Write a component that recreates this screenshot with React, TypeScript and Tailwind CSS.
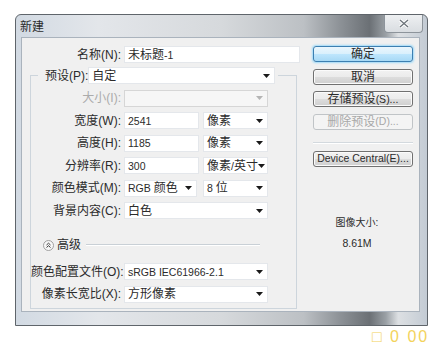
import React from "react";

function L({ children }: { children: React.ReactNode }) {
  return <span className="text-[10.5px]">{children}</span>;
}

function Arrow({ disabled }: { disabled?: boolean }) {
  return (
    <svg width="7" height="4" viewBox="0 0 7 4" className="shrink-0">
      <path d="M0 0H7L3.5 4Z" fill={disabled ? "#b4b4b4" : "#1a1a1a"} />
    </svg>
  );
}

function Select({
  w,
  children,
  disabled,
}: {
  w: string;
  children?: React.ReactNode;
  disabled?: boolean;
}) {
  return (
    <div
      className={
        "h-[17px] flex items-center justify-between pl-[3px] pr-[4px] border shrink-0 " +
        w +
        (disabled ? " bg-[#f6f6f6] border-[#d6d6d6]" : " bg-white border-[#e4e7eb]")
      }
    >
      <span className="whitespace-nowrap">{children}</span>
      <Arrow disabled={disabled} />
    </div>
  );
}

function Input({ w, children }: { w: string; children?: React.ReactNode }) {
  return (
    <div
      className={
        "h-[17px] flex items-center pl-[3px] bg-white border border-[#e4e7eb] shrink-0 whitespace-nowrap " +
        w
      }
    >
      <span>{children}</span>
    </div>
  );
}

function Row({
  label,
  lw,
  disabled,
  children,
}: {
  label: string;
  lw: string;
  disabled?: boolean;
  children?: React.ReactNode;
}) {
  return (
    <div className="flex items-center h-[17px]">
      <div
        className={
          "text-right pr-[3px] whitespace-nowrap shrink-0 " +
          lw +
          (disabled ? " text-[#ababab]" : "")
        }
      >
        {label}
      </div>
      {children}
    </div>
  );
}

function Btn({
  children,
  kind,
  className,
}: {
  children: React.ReactNode;
  kind?: "default" | "disabled";
  className?: string;
}) {
  const base =
    "h-[16px] w-[100px] rounded-[3px] border flex items-center justify-center whitespace-nowrap ";
  const style =
    kind === "default"
      ? "border-[#3c7fb1] bg-[linear-gradient(to_bottom,#eaf6fd_0%,#d9f0fc_50%,#bee6fd_51%,#a7d9f5_100%)] shadow-[0_0_2px_1px_#9fdaf8]"
      : kind === "disabled"
      ? "border-[#c0c4c7] bg-[#f4f4f4] text-[#a8a8a8]"
      : "border-[#707070] bg-[linear-gradient(to_bottom,#f2f2f2_0%,#ebebeb_50%,#dddddd_51%,#cfcfcf_100%)] shadow-[inset_0_0_0_1px_#fbfbfb]";
  return <div className={base + style + " " + (className ?? "")}>{children}</div>;
}

export default function App() {
  return (
    <div className="w-[440px] h-[345px] bg-white relative overflow-hidden text-[12px] leading-none text-[#2b2b2b] font-['Liberation_Sans','Noto_Sans_CJK_SC',sans-serif]">
      <div className="pl-[15px] pt-[14px]">
        <div className="w-[413px] h-[312px] rounded-t-[6px] border border-[#5f656b] flex flex-col bg-[linear-gradient(to_right,#d2dae3_0%,#e3e6ea_20%,#d6d9dc_50%,#bcc0c4_70%,#8c9196_79%,#6b7075_86%,#9aa0a5_90%,#dde0e3_93%,#c3cbd4_100%)]">
          {/* title bar */}
          <div className="h-[22px] flex items-start justify-between shrink-0">
            <span className="pl-[4px] pt-[6px]">新建</span>
            <div className="mr-[4px] w-[39px] h-[18px] rounded-b-[4px] border border-t-0 border-[#8d949b] bg-[linear-gradient(to_bottom,#eef0f2,#d9dde1)] flex items-center justify-center">
              <svg width="10" height="9" viewBox="0 0 10 9">
                <path d="M1 1L9 8M9 1L1 8" stroke="#ffffff" strokeWidth="3" />
                <path d="M1 1L9 8M9 1L1 8" stroke="#6c737a" strokeWidth="1.3" />
              </svg>
            </div>
          </div>
          {/* client */}
          <div className="flex-1 pl-[5px] pr-[7px] pb-[13px]">
            <div className="h-full bg-[#f0f0f0] border border-[#aab3bd] flex">
              {/* left column */}
              <div className="w-[291px] shrink-0 pt-[8px] flex flex-col">
                <Row label="名称(N):" lw="w-[102px]">
                  <Input w="w-[176px]">
                    未标题<L>-1</L>
                  </Input>
                </Row>
                <fieldset className="ml-[8px] w-[267px] border border-[#cdd5dc] mt-[4px] pb-[5px]">
                  <legend className="ml-[7px] w-[240px] pl-[7px] pr-[3px]">
                    <div className="flex items-center h-[17px] justify-between">
                      <span className="whitespace-nowrap">预设(P):</span>
                      <Select w="w-[187px]">自定</Select>
                    </div>
                  </legend>
                  <div className="flex flex-col gap-[5.5px] mt-[5.5px]">
                    <Row label="大小(I):" lw="w-[93px]" disabled>
                      <Select w="w-[144px]" disabled />
                    </Row>
                    <Row label="宽度(W):" lw="w-[93px]">
                      <Input w="w-[75px]">
                        <L>2541</L>
                      </Input>
                      <div className="w-[4px]" />
                      <Select w="w-[65px]">像素</Select>
                    </Row>
                    <Row label="高度(H):" lw="w-[93px]">
                      <Input w="w-[75px]">
                        <L>1185</L>
                      </Input>
                      <div className="w-[4px]" />
                      <Select w="w-[65px]">像素</Select>
                    </Row>
                    <Row label="分辨率(R):" lw="w-[93px]">
                      <Input w="w-[75px]">
                        <L>300</L>
                      </Input>
                      <div className="w-[4px]" />
                      <Select w="w-[65px]">
                        像素<L>/</L>英寸
                      </Select>
                    </Row>
                    <Row label="颜色模式(M):" lw="w-[93px]">
                      <Select w="w-[73px]">
                        <L>RGB </L>颜色
                      </Select>
                      <div className="w-[6px]" />
                      <Select w="w-[65px]">
                        <L>8 </L>位
                      </Select>
                    </Row>
                    <Row label="背景内容(C):" lw="w-[93px]">
                      <Select w="w-[144px]">白色</Select>
                    </Row>
                  </div>
                  <div className="flex items-center h-[12px] mt-[20px] pl-[12px]">
                    <svg width="11" height="11" viewBox="0 0 11 11" className="shrink-0">
                      <circle cx="5.5" cy="5.5" r="5" fill="#f7f7f7" stroke="#a0a0a0" />
                      <path d="M3.5 5L5.5 3.2L7.5 5M3.5 7.5L5.5 5.7L7.5 7.5" fill="none" stroke="#3a3a3a" strokeWidth="1" />
                    </svg>
                    <span className="ml-[3px] whitespace-nowrap">高级</span>
                    <div className="ml-[5px] w-[174px] h-[2px] border-t border-[#c9d0d6] border-b border-b-white" />
                  </div>
                  <div className="flex flex-col gap-[5.5px] mt-[12px]">
                    <Row label="颜色配置文件(O):" lw="w-[93px]">
                      <Select w="w-[144px]">
                        <L>sRGB IEC61966-2.1</L>
                      </Select>
                    </Row>
                    <Row label="像素长宽比(X):" lw="w-[93px]">
                      <Select w="w-[144px]">方形像素</Select>
                    </Row>
                  </div>
                </fieldset>
              </div>
              {/* right column */}
              <div className="w-[100px] shrink-0 pt-[8px] flex flex-col">
                <Btn kind="default">确定</Btn>
                <Btn className="mt-[6.5px]">取消</Btn>
                <Btn className="mt-[6.5px]">
                  存储预设<L>(S)...</L>
                </Btn>
                <Btn kind="disabled" className="mt-[6.5px]">
                  删除预设<L>(D)...</L>
                </Btn>
                <div className="mt-[12px] h-[2px] border-t border-[#d3d9de] border-b border-b-white" />
                <Btn className="mt-[7px]">
                  <L>Device Central(E)...</L>
                </Btn>
                <div className="mt-[51px] pr-[12px] flex flex-col items-center gap-[10px] text-[10px]">
                  <span>图像大小:</span>
                  <span className="text-[10.5px]">8.61M</span>
                </div>
              </div>
            </div>
          </div>
        </div>
      </div>
      <div className="absolute left-[372px] top-[329px] text-[16px] text-[#f3d35c] whitespace-nowrap tracking-[2px]">
        □ 0 00
      </div>
    </div>
  );
}
